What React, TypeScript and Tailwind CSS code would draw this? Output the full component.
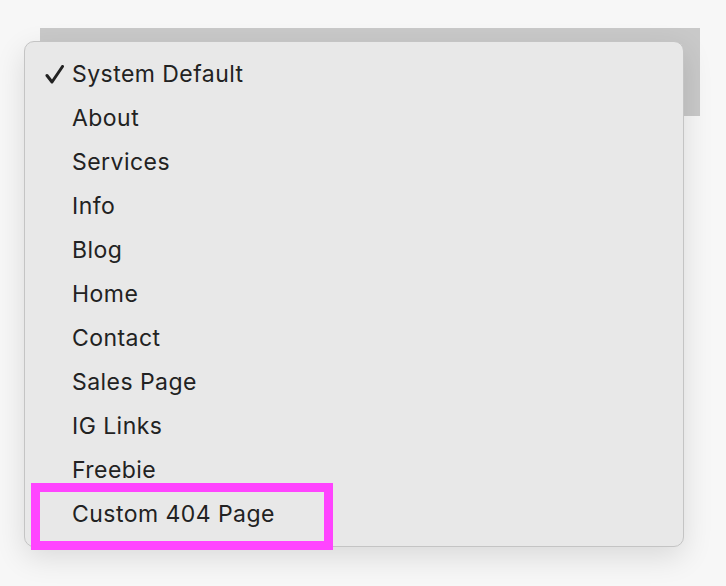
const items = [
  'System Default',
  'About',
  'Services',
  'Info',
  'Blog',
  'Home',
  'Contact',
  'Sales Page',
  'IG Links',
  'Freebie',
  'Custom 404 Page',
];

// Marca de selección dibujada a mano: trazo corto a la izquierda, largo hacia arriba.
function CheckMark() {
  return (
    <svg width="19" height="19" viewBox="0 0 19 19" fill="none">
      <path
        d="M2 10.5 L7 17 L17.5 1.5"
        stroke="#222"
        strokeWidth="3"
        strokeLinecap="round"
        strokeLinejoin="round"
      />
    </svg>
  );
}

export default function App() {
  return (
    <div
      className="relative h-[586px] w-[726px] overflow-hidden bg-[#f7f7f7]"
      style={{ fontFamily: 'Inter, "Noto Sans", sans-serif' }}
    >
      {/* barra gris detrás del menú */}
      <div className="absolute left-[40px] top-[28px] h-[88px] w-[660px] bg-[#c9c9c9]" />

      {/* menú desplegable */}
      <div className="absolute left-[24px] top-[41px] w-[660px] rounded-[10px] border border-[#c4c4c4] bg-[#e8e8e8] py-[10px] shadow-[0_10px_30px_rgba(0,0,0,0.12)]">
        {items.map((item, i) => (
          <div key={item} className="flex h-[44px] items-center text-[23px] tracking-[0.45px] text-[#222]">
            <span className="flex w-[47px] justify-start pl-[20px]">
              {i === 0 ? <CheckMark /> : null}
            </span>
            <span>{item}</span>
          </div>
        ))}
      </div>

      {/* recuadro de resaltado */}
      <div className="absolute left-[31px] top-[483px] h-[67px] w-[302px] border-[9px] border-[#ff44ff]" />
    </div>
  );
}
